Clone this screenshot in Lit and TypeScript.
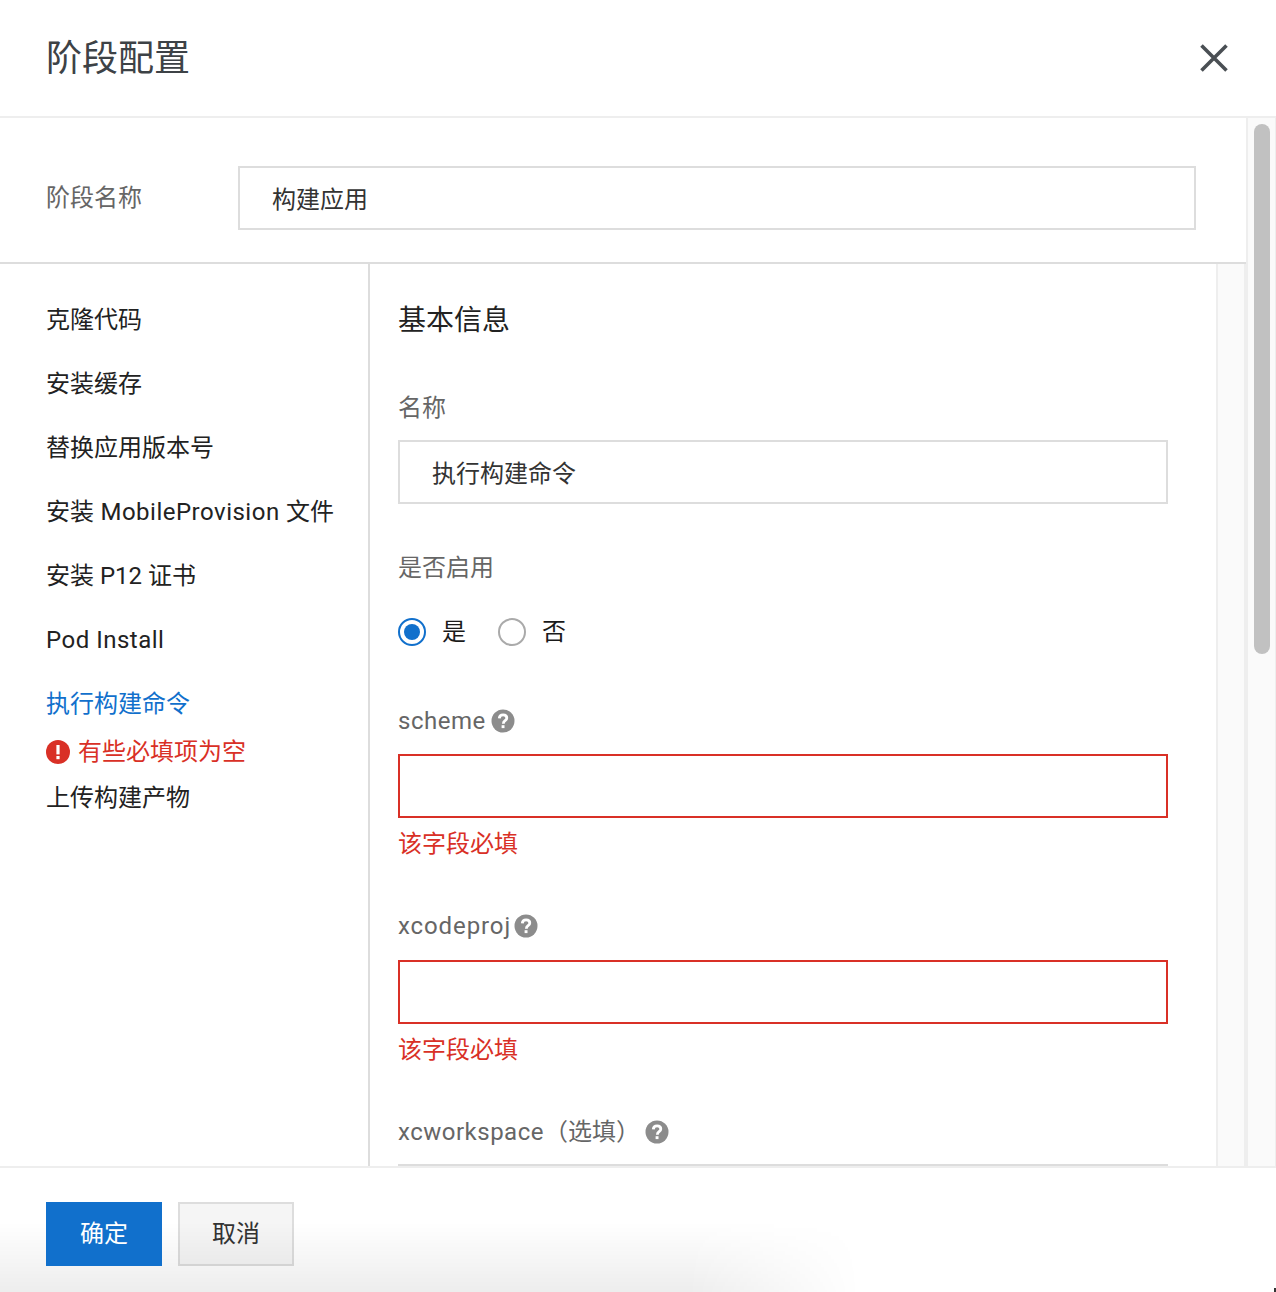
import { LitElement, html, css, svg } from 'lit';
import { customElement } from 'lit/decorators.js';

const helpIcon = html`<svg class="help" viewBox="0 0 24 24" width="24" height="24">
  <circle cx="12" cy="12" r="11.5" fill="#8c8c8c"></circle>
  <path d="M8.3 9.4c.1-2.2 1.6-3.6 3.8-3.6 2.1 0 3.7 1.2 3.7 3.1 0 1.3-.6 2-1.7 2.8-1.1.8-1.7 1.3-1.7 2.7v.3" fill="none" stroke="#fff" stroke-width="2.8"></path>
  <rect x="10.6" y="16.2" width="2.9" height="2.9" fill="#fff"></rect>
</svg>`;

const errorIcon = svg`<circle cx="12" cy="12" r="12" fill="#d93026"></circle>
  <rect x="10.4" y="5" width="3.2" height="9.4" fill="#fff"></rect>
  <rect x="10.4" y="16" width="3.2" height="3.2" fill="#fff"></rect>`;

@customElement('app-root')
export class AppRoot extends LitElement {
  static styles = css`
    :host {
      display: flex;
      flex-direction: column;
      position: relative;
      width: 1276px;
      height: 1292px;
      overflow: hidden;
      background: #fff;
      font-family: Roboto, "Noto Sans CJK SC", sans-serif;
      font-size: 24px;
      line-height: 32px;
      color: #222;
    }
    .latin {
      letter-spacing: 0.5px;
    }
    .latin.wide {
      letter-spacing: 0.9px;
    }
    .header {
      flex: none;
      height: 116px;
      display: flex;
      align-items: center;
      justify-content: space-between;
      padding: 0 46px;
      border-bottom: 2px solid #eee;
    }
    .title {
      font-size: 36px;
      line-height: 48px;
      color: #3d4246;
      padding-top: 2px;
    }
    .close {
      display: block;
      margin-right: 1px;
    }
    .body {
      flex: 1;
      min-height: 0;
      display: flex;
      overflow: hidden;
    }
    .content {
      flex: 1;
      min-width: 0;
      display: flex;
      flex-direction: column;
    }
    .stage {
      flex: none;
      height: 146px;
      box-sizing: border-box;
      display: flex;
      align-items: center;
      padding: 16px 50px 0 46px;
      border-bottom: 2px solid #ddd;
    }
    .stage label {
      width: 192px;
      color: #666;
    }
    .stage .input {
      flex: 1;
      width: auto;
      min-width: 0;
    }
    .input {
      box-sizing: border-box;
      display: block;
      width: 100%;
      height: 64px;
      padding: 0 32px 2px;
      border: 2px solid #ddd;
      background: #fff;
      font: inherit;
      color: #333;
      outline: none;
      border-radius: 0;
    }
    .input.invalid {
      border-color: #d93026;
    }
    .split {
      flex: 1;
      min-height: 0;
      display: flex;
    }
    .side {
      flex: none;
      width: 370px;
      box-sizing: border-box;
      padding: 24px 0 0 46px;
      border-right: 2px solid #ddd;
    }
    .side-item {
      padding: 16px 0;
    }
    .side-item.active {
      color: #1170cc;
    }
    .side-error {
      display: flex;
      align-items: center;
      gap: 8px;
      height: 32px;
      margin-bottom: -2px;
      color: #d93026;
    }
    .main {
      flex: 1;
      min-width: 0;
      padding: 0 48px 0 28px;
      overflow: hidden;
    }
    .main-title {
      font-size: 28px;
      line-height: 40px;
      color: #222;
      margin-top: 37px;
      margin-bottom: 51px;
    }
    .label {
      display: flex;
      align-items: center;
      gap: 5px;
      height: 32px;
      color: #666;
      margin-bottom: 16px;
    }
    .label.enable {
      margin-top: 48px;
      margin-bottom: 0;
    }
    .label.scheme {
      margin-top: 57px;
      margin-bottom: 17px;
    }
    .label.xcodeproj {
      margin-top: 50px;
      margin-bottom: 18px;
      gap: 3px;
    }
    .label.xcworkspace {
      margin-top: 50px;
      margin-bottom: 16px;
    }
    .field-error {
      color: #d93026;
      margin-top: 10px;
    }
    .radios {
      display: flex;
      align-items: center;
      margin-top: 32px;
      color: #1a1a1a;
    }
    .radio {
      box-sizing: border-box;
      width: 28px;
      height: 28px;
      border: 2px solid #aaa;
      border-radius: 50%;
      background: #fff;
      display: flex;
      align-items: center;
      justify-content: center;
      margin-right: 16px;
    }
    .radio.checked {
      border-color: #1170cc;
    }
    .radio.checked::after {
      content: "";
      width: 16px;
      height: 16px;
      border-radius: 50%;
      background: #1170cc;
    }
    .radio-text {
      margin-right: 32px;
    }
    .help {
      display: block;
      flex: none;
    }
    .rail {
      flex: none;
      box-sizing: border-box;
      width: 30px;
      background: #fafafa;
      border-left: 2px solid #eee;
      border-right: 2px solid #eee;
    }
    .scrollbar {
      flex: none;
      box-sizing: border-box;
      width: 30px;
      position: relative;
      background: #fafafa;
      border-left: 2px solid #eee;
      border-right: 1px solid #eee;
    }
    .thumb {
      position: absolute;
      left: 6px;
      top: 6px;
      width: 16px;
      height: 530px;
      border-radius: 8px;
      background: #c1c1c1;
    }
    .footer {
      flex: none;
      height: 126px;
      box-sizing: border-box;
      display: flex;
      gap: 16px;
      padding: 34px 0 0 46px;
      border-top: 2px solid #eee;
      position: relative;
    }
    .btn {
      box-sizing: border-box;
      width: 116px;
      height: 64px;
      border: 2px solid #ddd;
      background: #f5f5f5;
      color: #333;
      font: inherit;
      padding: 0;
      border-radius: 0;
      position: relative;
    }
    .btn.primary {
      background: #1170cc;
      border-color: #1170cc;
      color: #fff;
      z-index: 1;
    }
    .shade {
      position: absolute;
      left: 0;
      bottom: 0;
      height: 70px;
      width: 860px;
      background: linear-gradient(to bottom, rgba(0, 0, 0, 0), rgba(0, 0, 0, 0.07));
      -webkit-mask-image: linear-gradient(to right, #000 80%, transparent);
      mask-image: linear-gradient(to right, #000 80%, transparent);
      pointer-events: none;
    }
    .corner {
      position: absolute;
      right: 0;
      bottom: 0;
      width: 2px;
      height: 4px;
      background: #333;
    }
  `;

  render() {
    return html`
      <div class="header">
        <div class="title">阶段配置</div>
        <svg class="close" width="30" height="30" viewBox="0 0 30 30">
          <path d="M2.5 2.5l25 25M27.5 2.5l-25 25" stroke="#4a4f54" stroke-width="3.6" fill="none"></path>
        </svg>
      </div>
      <div class="body">
        <div class="content">
          <div class="stage">
            <label>阶段名称</label>
            <input class="input" .value=${'构建应用'} />
          </div>
          <div class="split">
            <div class="side">
              <div class="side-item">克隆代码</div>
              <div class="side-item">安装缓存</div>
              <div class="side-item">替换应用版本号</div>
              <div class="side-item">安装<span class="latin"> MobileProvision </span>文件</div>
              <div class="side-item">安装 P12 证书</div>
              <div class="side-item"><span class="latin">Pod Install</span></div>
              <div class="side-item active">执行构建命令</div>
              <div class="side-error">
                <svg width="24" height="24" viewBox="0 0 24 24">${errorIcon}</svg>
                有些必填项为空
              </div>
              <div class="side-item">上传构建产物</div>
            </div>
            <div class="main">
              <div class="main-title">基本信息</div>
              <div class="label">名称</div>
              <input class="input" .value=${'执行构建命令'} />
              <div class="label enable">是否启用</div>
              <div class="radios">
                <span class="radio checked"></span><span class="radio-text">是</span>
                <span class="radio"></span><span class="radio-text">否</span>
              </div>
              <div class="label scheme"><span class="latin">scheme</span>${helpIcon}</div>
              <input class="input invalid" />
              <div class="field-error">该字段必填</div>
              <div class="label xcodeproj"><span class="latin wide">xcodeproj</span>${helpIcon}</div>
              <input class="input invalid" />
              <div class="field-error">该字段必填</div>
              <div class="label xcworkspace"><span><span class="latin">xcworkspace</span>（选填）</span>${helpIcon}</div>
              <input class="input" />
            </div>
            <div class="rail"></div>
          </div>
        </div>
        <div class="scrollbar"><div class="thumb"></div></div>
      </div>
      <div class="footer">
        <button class="btn primary">确定</button>
        <button class="btn">取消</button>
        <div class="shade"></div>
      </div>
      <div class="corner"></div>
    `;
  }
}
